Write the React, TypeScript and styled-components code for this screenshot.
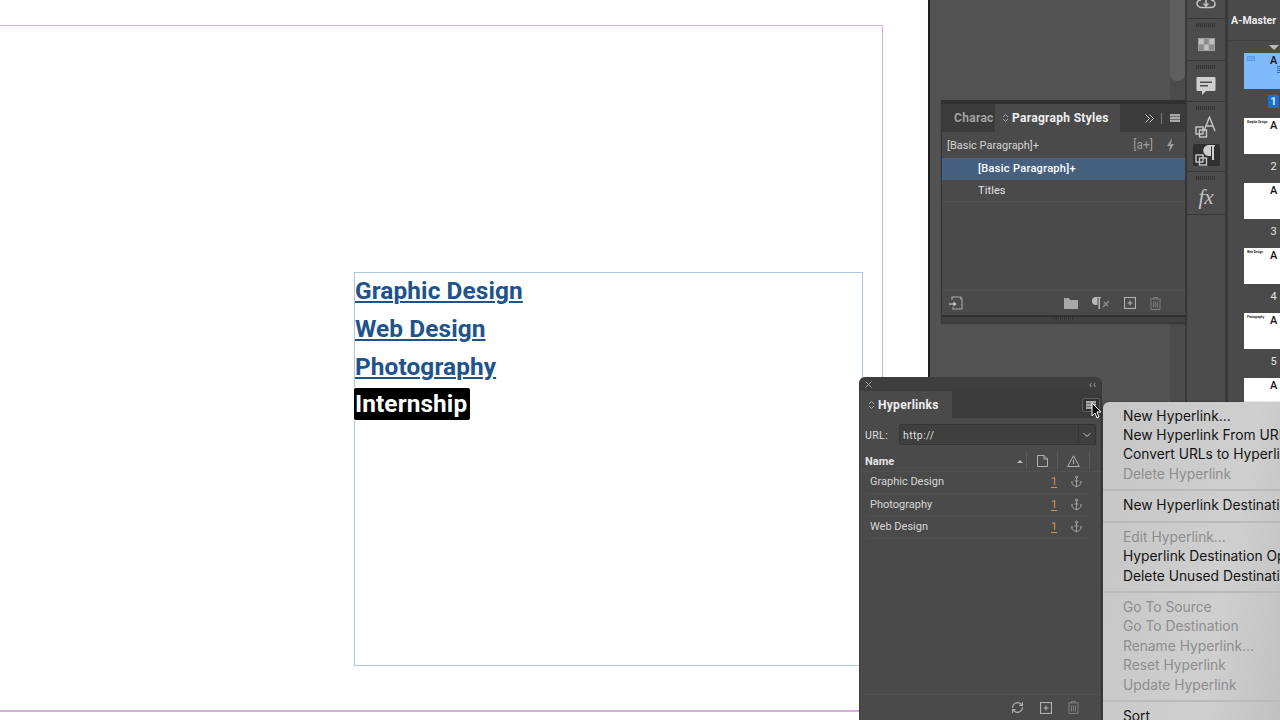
import React from 'react';
import styled, { createGlobalStyle } from 'styled-components';
import { Anchor, ChevronDown, RefreshCw, X } from 'lucide-react';

const PANEL = '#4a4a4a';
const PANEL_DARK = '#3b3b3b';
const UI_FONT = "Roboto, 'Liberation Sans', sans-serif";

const GlobalStyle = createGlobalStyle`
  html, body { margin: 0; padding: 0; background: #535353; }
  * { box-sizing: border-box; }
`;

const Screen = styled.div`
  position: relative;
  width: 1280px;
  height: 720px;
  overflow: hidden;
  display: flex;
  font-family: ${UI_FONT};
`;

/* document canvas */
const Canvas = styled.div`
  position: relative;
  flex: 0 0 928px;
  background: #fff;
`;

const MarginGuide = styled.div`
  position: absolute;
  left: -2px;
  top: 25px;
  width: 885px;
  height: 687px;
  border: 1px solid #dba9e3;
  border-bottom-width: 2px;
`;

const TextFrame = styled.div`
  position: absolute;
  left: 354px;
  top: 272px;
  width: 509px;
  height: 394px;
  border: 1px solid #aec8e2;
  display: flex;
  flex-direction: column;
  align-items: flex-start;
`;

const LinkLine = styled.div<{ $selected?: boolean }>`
  height: 38px;
  line-height: 35px;
  font-size: 24.4px;
  font-weight: 700;
  letter-spacing: 0.1px;
  color: ${(p) => (p.$selected ? '#fff' : '#20528c')};
  text-decoration: ${(p) => (p.$selected ? 'none' : 'underline')};
  text-decoration-thickness: 1.5px;
  text-underline-offset: 2px;
  ${(p) =>
    p.$selected &&
    `
    background: #000;
    height: 32px;
    line-height: 32px;
    margin: 1px 0 0 -1px;
    padding: 0 0 0 1px;
    width: 116px;
    border-radius: 2px;
  `}
`;

/* right hand application chrome */
const Dock = styled.div`
  flex: 1;
  display: flex;
  border-left: 2px solid #1f1f1f;
  background: #535353;
`;

const DockBody = styled.div`
  flex: 0 0 257px;
  display: flex;
  justify-content: flex-end;
  border-right: 2px solid #3a3a3a;
`;

const ScrollTrack = styled.div`
  width: 15px;
  background: #4b4b4b;
`;

const ScrollThumb = styled.div`
  height: 81px;
  background: #5f5f5f;
  border-radius: 0 0 7px 7px;
`;

const IconStrip = styled.div`
  flex: 0 0 41px;
  background: #4c4c4c;
  border-right: 3px solid #3a3a3a;
  display: flex;
  flex-direction: column;
`;

const StripSection = styled.div<{ $height: number }>`
  height: ${(p) => p.$height}px;
  border-bottom: 1px solid #363636;
  display: flex;
  flex-direction: column;
  align-items: center;
  gap: 4px;
  padding-top: 4px;
  color: #c4c4c4;
`;

const CloudSection = styled(StripSection)`
  padding-top: 0;
  justify-content: flex-end;
  padding-bottom: 8px;
`;

const Grip = styled.div`
  width: 20px;
  height: 4px;
  flex: none;
  background: repeating-linear-gradient(90deg, #353535 0 1px, #474747 1px 2px);
`;

const StripIcon = styled.div<{ $active?: boolean }>`
  width: 27px;
  height: ${(p) => (p.$active ? 22 : 26)}px;
  flex: none;
  border-radius: 2px;
  background: ${(p) => (p.$active ? '#303030' : 'transparent')};
  display: flex;
  align-items: center;
  justify-content: center;
`;

const FxLabel = styled.span`
  font-family: 'Liberation Serif', serif;
  font-style: italic;
  font-size: 21px;
  color: #c4c4c4;
`;

const PagesPanel = styled.div`
  flex: 1;
  background: #4a4a4a;
  display: flex;
  flex-direction: column;
  overflow: hidden;
`;

const MasterHead = styled.div`
  height: 41px;
  flex: none;
  border-bottom: 1px solid #414141;
  padding: 14px 0 0 3px;
  font-size: 10.5px;
  font-weight: 700;
  letter-spacing: 0.1px;
  color: #ececec;
  white-space: nowrap;
`;

const PageList = styled.div`
  padding: 4px 0 0 16px;
  display: flex;
  flex-direction: column;
`;

const Triangle = styled.div`
  width: 0;
  height: 0;
  margin-left: 25px;
  border-left: 5px solid transparent;
  border-right: 5px solid transparent;
  border-top: 5px solid #b9b9b9;
  margin-bottom: 3px;
`;

const Page = styled.div`
  height: 65px;
  display: flex;
  flex-direction: column;
`;

const Thumb = styled.div<{ $current?: boolean }>`
  position: relative;
  width: 60px;
  height: 35.5px;
  flex: none;
  background: ${(p) => (p.$current ? '#80bafb' : '#fff')};
  display: flex;
  padding: 2px 0 0 3px;
`;

const ThumbText = styled.div`
  width: 23px;
  font-size: 3px;
  line-height: 5px;
  font-weight: 700;
  color: #222;
  white-space: nowrap;
`;

const FrameMark = styled.div`
  width: 8px;
  height: 5px;
  margin-top: 1px;
  background: #6ea9f0;
  border: 1px solid #5f9be4;
`;

const ThumbMark = styled.div`
  font-size: 11px;
  line-height: 11px;
  font-weight: 500;
  color: #111;
`;

const LinkBars = styled.div`
  position: absolute;
  left: 33px;
  top: 13px;
  width: 4px;
  height: 7px;
  background: repeating-linear-gradient(180deg, #1f74cf 0 1px, #80bafb 1px 2px);
`;

const PageNumber = styled.div<{ $current?: boolean }>`
  width: 11px;
  height: 13px;
  margin: 6.5px 0 0 24px;
  font-size: 11px;
  line-height: 13px;
  text-align: center;
  font-weight: ${(p) => (p.$current ? 700 : 400)};
  color: #e4e4e4;
  background: ${(p) => (p.$current ? '#1473d2' : 'transparent')};
`;

/* floating panels */
const FloatPanel = styled.div<{ $left: number; $top: number; $width: number; $height: number }>`
  position: absolute;
  left: ${(p) => p.$left}px;
  top: ${(p) => p.$top}px;
  width: ${(p) => p.$width}px;
  height: ${(p) => p.$height}px;
  background: ${PANEL};
  display: flex;
  flex-direction: column;
  color: #d8d8d8;
`;

const StylesFrame = styled(FloatPanel)`
  border: 1px solid #383838;
  border-top: 4px solid #303030;
  box-shadow: 0 1px 2px rgba(0, 0, 0, 0.3);
`;

const HyperlinksFrame = styled(FloatPanel)`
  border-radius: 6px 6px 0 0;
  border-right: 1px solid #383838;
  border-left: 1px solid #3a3a3a;
`;

const TitleBar = styled.div`
  height: 14px;
  flex: none;
  background: #3e3e3e;
  border-radius: 6px 6px 0 0;
  display: flex;
  align-items: center;
  justify-content: space-between;
  padding: 0 4px 0 3px;
  color: #a8a8a8;
  font-size: 10px;
  letter-spacing: 1px;
`;

const TabRow = styled.div<{ $height: number }>`
  height: ${(p) => p.$height}px;
  flex: none;
  background: ${PANEL_DARK};
  display: flex;
  align-items: stretch;
`;

const Tab = styled.div<{ $width: number; $active?: boolean; $pad: number }>`
  width: ${(p) => p.$width}px;
  padding-left: ${(p) => p.$pad}px;
  display: flex;
  align-items: center;
  gap: 3px;
  font-size: 12px;
  font-weight: 700;
  letter-spacing: 0.3px;
  white-space: nowrap;
  overflow: hidden;
  background: ${(p) => (p.$active ? PANEL : 'transparent')};
  color: ${(p) => (p.$active ? '#eeeeee' : '#a2a2a2')};
`;

const TabTools = styled.div<{ $pad: number }>`
  margin-left: auto;
  padding-right: ${(p) => p.$pad}px;
  display: flex;
  align-items: center;
  gap: 7px;
  color: #bdbdbd;
`;

const ToolDivider = styled.div`
  width: 1px;
  height: 11px;
  background: #7a7a7a;
`;

const MenuButton = styled.div<{ $boxed?: boolean }>`
  width: ${(p) => (p.$boxed ? 18 : 11)}px;
  height: ${(p) => (p.$boxed ? 14 : 9)}px;
  display: flex;
  align-items: center;
  justify-content: center;
  border-radius: 2px;
  background: ${(p) => (p.$boxed ? '#333' : 'transparent')};
  border: ${(p) => (p.$boxed ? '1px solid #5d5d5d' : 'none')};
`;

const Burger = styled.div`
  width: 10px;
  height: 8px;
  background: repeating-linear-gradient(180deg, #a9a9a9 0 2px, #6f6f6f 2px 3px);
`;

const CurrentStyle = styled.div`
  height: 26px;
  flex: none;
  display: flex;
  align-items: center;
  justify-content: space-between;
  padding: 0 10px 0 5px;
  font-size: 11px;
  color: #d4d4d4;
`;

const StyleTools = styled.div`
  display: flex;
  align-items: center;
  gap: 13px;
  color: #9c9c9c;
  font-size: 12px;
`;

const StyleRow = styled.div<{ $selected?: boolean }>`
  height: 22px;
  flex: none;
  display: flex;
  align-items: center;
  padding-left: 36px;
  padding-bottom: 1px;
  font-size: 11px;
  letter-spacing: ${(p) => (p.$selected ? 0.3 : 0.1)}px;
  background: ${(p) => (p.$selected ? '#46607f' : 'transparent')};
  color: ${(p) => (p.$selected ? '#fff' : '#e2e2e2')};
  font-weight: ${(p) => (p.$selected ? 500 : 400)};
  border-bottom: ${(p) => (p.$selected ? 'none' : '1px solid #505050')};
`;

const Spacer = styled.div`
  flex: 1;
`;

const PanelFooter = styled.div<{ $height: number }>`
  height: ${(p) => p.$height}px;
  flex: none;
  border-top: 1px solid #505050;
  display: flex;
  align-items: center;
  color: #b5b5b5;
`;

const FooterGroup = styled.div<{ $gap: number; $right: number }>`
  margin-left: auto;
  display: flex;
  align-items: center;
  gap: ${(p) => p.$gap}px;
  padding-right: ${(p) => p.$right}px;
`;

const LoadIcon = styled.div`
  margin-left: 7px;
  display: flex;
`;

const ResizeBar = styled.div`
  height: 7px;
  flex: none;
  border-top: 2px solid #2f2f2f;
  background: #414141;
  display: flex;
  justify-content: center;
`;

const ResizeGrip = styled.div`
  width: 20px;
  height: 4px;
  background: repeating-linear-gradient(90deg, #353535 0 1px, #454545 1px 2px);
`;

/* hyperlinks panel body */
const UrlRow = styled.div`
  height: 21px;
  flex: none;
  margin-top: 6px;
  display: flex;
  align-items: center;
  padding: 0 5px;
  font-size: 10.5px;
  letter-spacing: 0.4px;
  color: #dedede;
`;

const UrlLabel = styled.span`
  width: 34px;
  padding-top: 2px;
`;

const UrlBox = styled.div`
  flex: 1;
  height: 21px;
  display: flex;
  align-items: center;
  border-radius: 2px;
  background: #3f3f3f;
  border: 1px solid #353535;
`;

const UrlValue = styled.span`
  flex: 1;
  padding: 2px 0 0 3px;
`;

const UrlArrow = styled.div`
  width: 17px;
  height: 100%;
  border-left: 1px solid #353535;
  display: flex;
  align-items: center;
  justify-content: center;
  color: #cfcfcf;
`;

const ColumnHead = styled.div`
  height: 19.5px;
  flex: none;
  margin-top: 7px;
  display: flex;
  align-items: center;
  padding-left: 5px;
  border-bottom: 1px solid #505050;
  font-size: 11px;
  font-weight: 700;
  color: #e6e6e6;
`;

const NameHead = styled.div`
  flex: 1;
`;

const SortMark = styled.div`
  width: 0;
  height: 0;
  margin-right: 3px;
  border-left: 3px solid transparent;
  border-right: 3px solid transparent;
  border-bottom: 3px solid #bdbdbd;
`;

const HeadCell = styled.div<{ $width: number }>`
  width: ${(p) => p.$width}px;
  height: 18px;
  display: flex;
  align-items: center;
  justify-content: center;
  border-left: 1px solid #5a5a5a;
  color: #b0b0b0;
`;

const LinkRows = styled.div`
  display: flex;
  flex-direction: column;
`;

const LinkRow = styled.div`
  height: 22.4px;
  display: flex;
  align-items: center;
  padding: 0 7px 1px 5px;
  margin: 0 11px 0 5px;
  border-bottom: 1px solid #4f4f4f;
  font-size: 11px;
  color: #d6d6d6;
`;

const LinkName = styled.span`
  flex: 1;
`;

const PageRef = styled.span`
  width: 12px;
  color: #d2924a;
  text-decoration: underline;
  text-underline-offset: 2px;
`;

const RowAnchor = styled.div`
  margin-left: 7px;
  display: flex;
  color: #b0b0b0;
`;

/* fly-out menu */
const FlyOut = styled.div`
  position: absolute;
  left: 1103px;
  top: 402px;
  width: 200px;
  height: 330px;
  border-radius: 6px 0 0 0;
  background: linear-gradient(100deg, #c6c6c6 0%, #cfcfcf 60%, #bcbcbc 100%);
  padding: 4.5px 0 0 20px;
  font-family: Inter, 'Liberation Sans', sans-serif;
  box-shadow: -1px 0 2px rgba(0, 0, 0, 0.35);
`;

const MenuItem = styled.div<{ $disabled?: boolean }>`
  height: 19.45px;
  line-height: 19.45px;
  font-size: 13.8px;
  white-space: nowrap;
  color: ${(p) => (p.$disabled ? '#8d8d8d' : '#141414')};
`;

const MenuRule = styled.div`
  height: 2px;
  margin: 5px 0 5px -20px;
  background: #bababa;
`;

const Pointer = styled.svg`
  position: absolute;
  left: 1091px;
  top: 402px;
`;

const Stepper = () => (
  <svg width="7" height="10" viewBox="0 0 7 10" fill="none" stroke="#a8a8a8" strokeWidth="1">
    <path d="M1 4 3.5 1.5 6 4M1 6l2.5 2.5L6 6" />
  </svg>
);

const GridIcon = () => (
  <svg width="17" height="13" viewBox="0 0 17 13" fill="#c0c0c0">
    <rect width="17" height="13" fill="#a0a0a0" />
    <rect x="1" y="1" width="4.500" height="5" />
    <rect x="6.500" y="1" width="4" height="5" fill="#8a8a8a" />
    <rect x="11.500" y="1" width="4.500" height="5" />
    <rect x="1" y="7" width="4.500" height="5" fill="#8a8a8a" />
    <rect x="6.500" y="7" width="4" height="5" />
    <rect x="11.500" y="7" width="4.500" height="5" fill="#8a8a8a" />
  </svg>
);

const CommentIcon = () => (
  <svg width="20" height="20" viewBox="0 0 20 20">
    <path d="M1.500 1h17a1 1 0 0 1 1 1v12a1 1 0 0 1-1 1H10l-4 4v-4H1.500a1 1 0 0 1-1-1V2a1 1 0 0 1 1-1z" fill="#cfcfcf" />
    <path d="M4 5.500h12v1.600H4zM4 9h8v1.600H4z" fill="#4c4c4c" />
  </svg>
);

const StyleSquares = () => (
  <g fill="none" stroke="#c8c8c8" strokeWidth="1.4">
    <rect x="1" y="11" width="7" height="7" />
    <rect x="4.500" y="14" width="7" height="7" />
  </g>
);

const CharStylesIcon = () => (
  <svg width="22" height="22" viewBox="0 0 22 22">
    <StyleSquares />
    <path d="M9 15 14.500 1l5.500 14M11 10h7" fill="none" stroke="#c8c8c8" strokeWidth="1.4" />
  </svg>
);

const ParaStylesIcon = () => (
  <svg width="22" height="22" viewBox="0 0 22 22">
    <StyleSquares />
    <path d="M13 1h7v1.500h-1V16h-2V2.500h-1V12h-1.500A5.500 5.500 0 0 1 13 1z" fill="#cdcdcd" />
  </svg>
);

const LightningIcon = () => (
  <svg width="9" height="14" viewBox="0 0 9 14" fill="#9c9c9c">
    <path d="M6 0 1 8h3L3 14l5-8H5z" />
  </svg>
);

const LoadStylesIcon = () => (
  <svg width="14" height="14" viewBox="0 0 14 14" fill="none" stroke="#a8a8a8" strokeWidth="1.1">
    <path d="M3 4V1h9v2M11 3h2v10H4v-2" />
    <path d="M0 8h6" strokeWidth="1.600" />
    <path d="M4.500 5.500 7.500 8 4.500 10.500z" fill="#d0d0d0" stroke="none" />
  </svg>
);

const FolderIcon = () => (
  <svg width="14" height="11" viewBox="0 0 14 11" fill="#a8a8a8">
    <path d="M0 0h5l1 2h8v9H0z" />
  </svg>
);

const ClearIcon = () => (
  <svg width="18" height="12" viewBox="0 0 18 12">
    <path d="M3.500 0H9v1H8v11H6.500V1h-1v7h-1A4 4 0 0 1 3.500 0z" fill="#b8b8b8" />
    <path d="m11 10 6-6M12 5l4 4" stroke="#8a8a8a" strokeWidth="1.600" />
  </svg>
);

const NewIcon = () => (
  <svg width="12" height="12" viewBox="0 0 12 12" fill="none" stroke="#b0b0b0">
    <rect x=".5" y=".5" width="11" height="11" strokeWidth="1.200" />
    <path d="M3.500 6h5M6 3.500v5" strokeWidth="1.200" />
  </svg>
);

const TrashIcon = () => (
  <svg width="11" height="13" viewBox="0 0 11 13" fill="none" stroke="#7c7c7c">
    <path d="M0 2h11M3.500 2V.5h4V2M1 2.500V12.500h9v-10M3.500 4.500v6M5.500 4.500v6M7.500 4.500v6" />
  </svg>
);

const DocIcon = () => (
  <svg width="11" height="12" viewBox="0 0 11 12" fill="none" stroke="#b0b0b0">
    <path d="M.5.5h6.500l3.500 3.500v7.500H.5zM7 .5V4h3.500" />
  </svg>
);

const WarnIcon = () => (
  <svg width="13" height="12" viewBox="0 0 13 12" fill="none" stroke="#b0b0b0">
    <path d="M6.500.8 12.400 11.500H.6zM6.500 4.500v4.500" />
  </svg>
);

const CloudIcon = () => (
  <svg width="20" height="10" viewBox="0 0 20 10" fill="none" stroke="#c4c4c4" strokeWidth="1.500">
    <path d="M5 0C2 0 1 2 1 3.500S2.500 7.500 5 7.500h10c3 0 4-2 4-4S17 0 15 0M10 0v6M7.500 3.500 10 6l2.500-2.500" />
  </svg>
);

const thumbs = [
  { n: 2, text: 'Graphic Design' },
  { n: 3, text: '' },
  { n: 4, text: 'Web Design' },
  { n: 5, text: 'Photography' }
];

const links = ['Graphic Design', 'Photography', 'Web Design'];

const menu: (string | { t: string; off: true } | null)[] = [
  'New Hyperlink...',
  'New Hyperlink From URL',
  'Convert URLs to Hyperlinks',
  { t: 'Delete Hyperlink', off: true },
  null,
  'New Hyperlink Destination...',
  null,
  { t: 'Edit Hyperlink...', off: true },
  'Hyperlink Destination Options...',
  'Delete Unused Destinations',
  null,
  { t: 'Go To Source', off: true },
  { t: 'Go To Destination', off: true },
  { t: 'Rename Hyperlink...', off: true },
  { t: 'Reset Hyperlink', off: true },
  { t: 'Update Hyperlink', off: true },
  null,
  'Sort'
];

const App = () => {
  return (
    <Screen>
      <GlobalStyle />
      <Canvas>
        <MarginGuide />
        <TextFrame>
          <LinkLine>Graphic Design</LinkLine>
          <LinkLine>Web Design</LinkLine>
          <LinkLine>Photography</LinkLine>
          <LinkLine $selected>Internship</LinkLine>
        </TextFrame>
      </Canvas>

      <Dock>
        <DockBody>
          <ScrollTrack>
            <ScrollThumb />
          </ScrollTrack>
        </DockBody>
        <IconStrip>
          <CloudSection $height={19}>
            <CloudIcon />
          </CloudSection>
          <StripSection $height={42}>
            <Grip />
            <StripIcon>
              <GridIcon />
            </StripIcon>
          </StripSection>
          <StripSection $height={41}>
            <Grip />
            <StripIcon>
              <CommentIcon />
            </StripIcon>
          </StripSection>
          <StripSection $height={70}>
            <Grip />
            <StripIcon>
              <CharStylesIcon />
            </StripIcon>
            <StripIcon $active>
              <ParaStylesIcon />
            </StripIcon>
          </StripSection>
          <StripSection $height={43}>
            <Grip />
            <StripIcon>
              <FxLabel>fx</FxLabel>
            </StripIcon>
          </StripSection>
        </IconStrip>
        <PagesPanel>
          <MasterHead>A-Master</MasterHead>
          <PageList>
            <Triangle />
            <Page>
              <Thumb $current>
                <ThumbText>
                  <FrameMark />
                </ThumbText>
                <ThumbMark>A</ThumbMark>
                <LinkBars />
              </Thumb>
              <PageNumber $current>1</PageNumber>
            </Page>
            {thumbs.map((page) => (
              <Page key={page.n}>
                <Thumb>
                  <ThumbText>{page.text}</ThumbText>
                  <ThumbMark>A</ThumbMark>
                </Thumb>
                <PageNumber>{page.n}</PageNumber>
              </Page>
            ))}
            <Page>
              <Thumb>
                <ThumbText />
                <ThumbMark>A</ThumbMark>
              </Thumb>
            </Page>
          </PageList>
        </PagesPanel>
      </Dock>

      <StylesFrame $left={941} $top={100} $width={245} $height={223}>
        <TabRow $height={28}>
          <Tab $width={53} $pad={12}>Charac</Tab>
          <Tab $width={125} $pad={7} $active>
            <Stepper />
            Paragraph Styles
          </Tab>
          <TabTools $pad={5}>
            <svg width="9" height="9" viewBox="0 0 9 9" fill="none" stroke="#c4c4c4">
              <path d="m.5.5 4 4-4 4M4.500.5l4 4-4 4" />
            </svg>
            <ToolDivider />
            <MenuButton>
              <Burger />
            </MenuButton>
          </TabTools>
        </TabRow>
        <CurrentStyle>
          [Basic Paragraph]+
          <StyleTools>
            [a+]
            <LightningIcon />
          </StyleTools>
        </CurrentStyle>
        <StyleRow $selected>[Basic Paragraph]+</StyleRow>
        <StyleRow>Titles</StyleRow>
        <Spacer />
        <PanelFooter $height={25}>
          <LoadIcon>
            <LoadStylesIcon />
          </LoadIcon>
          <FooterGroup $gap={14} $right={24}>
            <FolderIcon />
            <ClearIcon />
            <NewIcon />
            <TrashIcon />
          </FooterGroup>
        </PanelFooter>
        <ResizeBar>
          <ResizeGrip />
        </ResizeBar>
      </StylesFrame>

      <HyperlinksFrame $left={859} $top={377} $width={243} $height={343}>
        <TitleBar>
          <X size={11} />
          ‹‹
        </TitleBar>
        <TabRow $height={27}>
          <Tab $width={92} $pad={8} $active>
            <Stepper />
            Hyperlinks
          </Tab>
          <TabTools $pad={1}>
            <MenuButton $boxed>
              <Burger />
            </MenuButton>
          </TabTools>
        </TabRow>
        <UrlRow>
          <UrlLabel>URL:</UrlLabel>
          <UrlBox>
            <UrlValue>http://</UrlValue>
            <UrlArrow>
              <ChevronDown size={12} />
            </UrlArrow>
          </UrlBox>
        </UrlRow>
        <ColumnHead>
          <NameHead>Name</NameHead>
          <SortMark />
          <HeadCell $width={31}>
            <DocIcon />
          </HeadCell>
          <HeadCell $width={32}>
            <WarnIcon />
          </HeadCell>
          <HeadCell $width={12} />
        </ColumnHead>
        <LinkRows>
          {links.map((name) => (
            <LinkRow key={name}>
              <LinkName>{name}</LinkName>
              <PageRef>1</PageRef>
              <RowAnchor>
                <Anchor size={13} strokeWidth={1.5} />
              </RowAnchor>
            </LinkRow>
          ))}
        </LinkRows>
        <Spacer />
        <PanelFooter $height={26}>
          <FooterGroup $gap={16} $right={22}>
            <RefreshCw size={13} strokeWidth={2} />
            <NewIcon />
            <TrashIcon />
          </FooterGroup>
        </PanelFooter>
      </HyperlinksFrame>

      <FlyOut>
        {menu.map((item, i) =>
          item === null ? (
            <MenuRule key={i} />
          ) : typeof item === 'string' ? (
            <MenuItem key={i}>{item}</MenuItem>
          ) : (
            <MenuItem key={i} $disabled>
              {item.t}
            </MenuItem>
          )
        )}
      </FlyOut>

      <Pointer width="12" height="18" viewBox="0 0 12 18">
        <path d="M1 1v13l3-3 2 5 2-1-2-5h4z" fill="#111" stroke="#fff" strokeWidth="1" />
      </Pointer>
    </Screen>
  );
};

export default App;
